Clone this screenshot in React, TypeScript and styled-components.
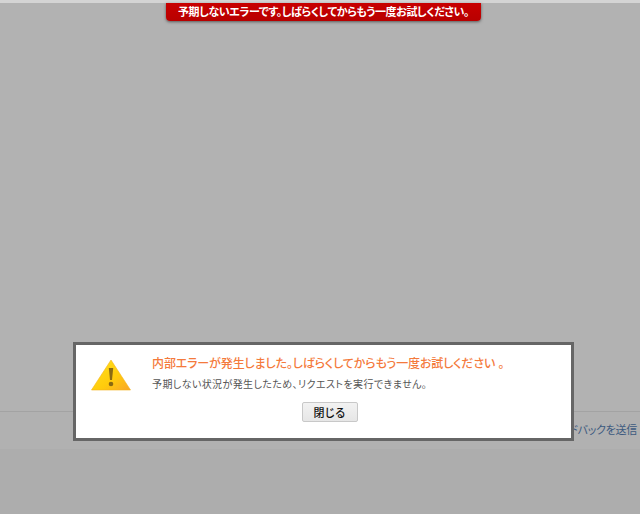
import React from 'react';
import styled, { createGlobalStyle } from 'styled-components';

const GlobalStyle = createGlobalStyle`
    html, body {
        margin:0;
        padding:0;
        height:100%;
        overflow:hidden;
    }
    #root {
        height:100%;
    }
`

const jp = `"Liberation Sans", "Noto Sans CJK JP", sans-serif`;

const Page = styled.div`
    position:relative;
    width:640px;
    height:514px;
    display:flex;
    flex-direction:column;
    background-color:#adadad;
    font-family:${jp};
    font-feature-settings:"palt";
`

const TopEdge = styled.div`
    height:3px;
    background-color:#d4d4d4;
`

const Main = styled.div`
    height:408px;
    background-color:#b2b2b2;
`

const Footer = styled.div`
    height:38px;
    box-sizing:border-box;
    border-top:1px solid #a3a3a3;
    background-color:#b1b1b1;
    display:flex;
    justify-content:flex-end;
    align-items:center;
    padding:0 3px 4px 0;
`

const FeedbackLink = styled.a`
    font-size:11px;
    letter-spacing:-0.3px;
    color:#3d5a80;
    white-space:nowrap;
`

const Toast = styled.div`
    position:absolute;
    top:3px;
    left:166px;
    width:315px;
    height:18px;
    box-sizing:border-box;
    border-radius:0 0 4px 4px;
    background:linear-gradient(#c80000, #b80000);
    box-shadow:0 1px 3px rgba(0,0,0,0.5);
    color:#fff;
    font-size:11px;
    font-weight:700;
    letter-spacing:-0.4px;
    line-height:18px;
    text-align:center;
    white-space:nowrap;
`

const Dialog = styled.div`
    position:absolute;
    top:342px;
    left:73px;
    width:501px;
    height:99px;
    box-sizing:border-box;
    border:3px solid #666;
    background-color:#fff;
    display:flex;
    padding:11px 0 0 15px;
`

const IconBox = styled.div`
    width:46px;
    flex:none;
    padding-top:3px;
`

const Body = styled.div`
    flex:1;
    padding-left:15px;
    display:flex;
    flex-direction:column;
`

const Title = styled.div`
    font-size:12px;
    font-weight:500;
    letter-spacing:-0.12px;
    line-height:16px;
    color:#f47a3c;
    white-space:nowrap;
`

const Message = styled.div`
    font-size:10px;
    letter-spacing:0.4px;
    line-height:14px;
    margin-top:6px;
    color:#555;
    white-space:nowrap;
`

const Actions = styled.div`
    display:flex;
    justify-content:center;
    margin-top:11px;
    padding-right:64px;
`

const CloseButton = styled.button`
    width:56px;
    height:20px;
    margin-top:-1px;
    padding:0;
    box-sizing:border-box;
    border:1px solid #c8c8c8;
    border-radius:2px;
    background:linear-gradient(#f2f2f2, #e6e6e6);
    color:#111;
    font-family:${jp};
    font-size:11px;
    font-weight:500;
    letter-spacing:-0.4px;
`

const WarningIcon = () => (
    <svg width="40" height="32" viewBox="0 0 40 32">
        <defs>
            <linearGradient id="warn" x1="0" y1="0" x2="1" y2="1">
                <stop offset="0" stopColor="#ffe21e" />
                <stop offset="0.6" stopColor="#ffcb0c" />
                <stop offset="1" stopColor="#f9a52a" />
            </linearGradient>
        </defs>
        <path d="M20 1 L39.5 31 H0.5 Z" fill="url(#warn)" stroke="#f5b417" strokeWidth="0.6" strokeLinejoin="round" />
        <path d="M17.8 9 H22.2 L21 21 H19 Z" fill="#8a6a12" />
        <circle cx="20" cy="25" r="2.3" fill="#8a6a12" />
    </svg>
)

const App = () => {
    return (
        <Page>
            <GlobalStyle />
            <TopEdge />
            <Main />
            <Footer>
                <FeedbackLink>フィードバックを送信</FeedbackLink>
            </Footer>
            <Toast>予期しないエラーです。しばらくしてからもう一度お試しください。</Toast>
            <Dialog>
                <IconBox>
                    <WarningIcon />
                </IconBox>
                <Body>
                    <Title>内部エラーが発生しました。しばらくしてからもう一度お試しください 。</Title>
                    <Message>予期しない状況が発生したため、リクエストを実行できません。</Message>
                    <Actions>
                        <CloseButton>閉じる</CloseButton>
                    </Actions>
                </Body>
            </Dialog>
        </Page>
    )
}

export default App;
